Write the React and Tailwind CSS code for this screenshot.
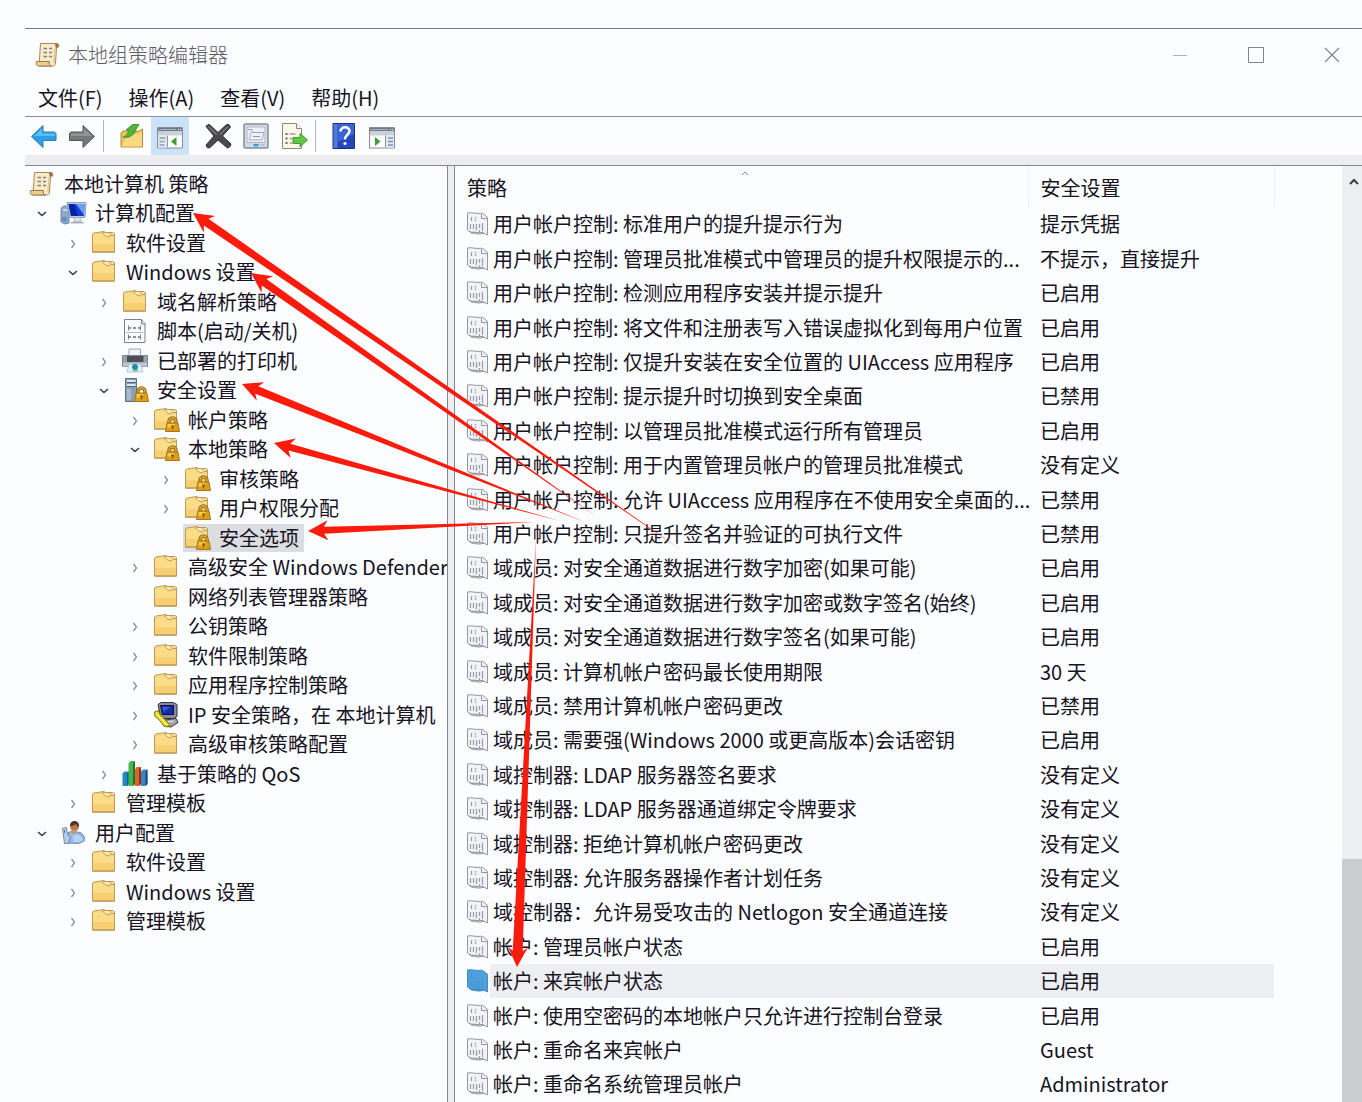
import { useState } from 'react';
import clsx from 'clsx';

const treeRows = [
  { id: 'root', level: 0, icon: 'scroll', label: '本地计算机 策略' },
  { id: 'computer', level: 1, icon: 'computer', label: '计算机配置', state: 'open' },
  { id: 'c-soft', level: 2, icon: 'folder', label: '软件设置', state: 'closed' },
  { id: 'c-win', level: 2, icon: 'folder', label: 'Windows 设置', state: 'open' },
  { id: 'dns', level: 3, icon: 'folder', label: '域名解析策略', state: 'closed' },
  { id: 'scripts', level: 3, icon: 'script', label: '脚本(启动/关机)' },
  { id: 'printers', level: 3, icon: 'printer', label: '已部署的打印机', state: 'closed' },
  { id: 'security', level: 3, icon: 'server', label: '安全设置', state: 'open' },
  { id: 'account', level: 4, icon: 'locked', label: '帐户策略', state: 'closed' },
  { id: 'local', level: 4, icon: 'locked', label: '本地策略', state: 'open' },
  { id: 'audit', level: 5, icon: 'locked', label: '审核策略', state: 'closed' },
  { id: 'rights', level: 5, icon: 'locked', label: '用户权限分配', state: 'closed' },
  { id: 'options', level: 5, icon: 'locked', label: '安全选项' },
  { id: 'defender', level: 4, icon: 'folder', label: '高级安全 Windows Defender', state: 'closed' },
  { id: 'network', level: 4, icon: 'folder', label: '网络列表管理器策略' },
  { id: 'pubkey', level: 4, icon: 'folder', label: '公钥策略', state: 'closed' },
  { id: 'restrict', level: 4, icon: 'folder', label: '软件限制策略', state: 'closed' },
  { id: 'appctl', level: 4, icon: 'folder', label: '应用程序控制策略', state: 'closed' },
  { id: 'ipsec', level: 4, icon: 'ipsec', label: 'IP 安全策略，在 本地计算机', state: 'closed' },
  { id: 'advaudit', level: 4, icon: 'folder', label: '高级审核策略配置', state: 'closed' },
  { id: 'qos', level: 3, icon: 'chart', label: '基于策略的 QoS', state: 'closed' },
  { id: 'c-tpl', level: 2, icon: 'folder', label: '管理模板', state: 'closed' },
  { id: 'user', level: 1, icon: 'user', label: '用户配置', state: 'open' },
  { id: 'u-soft', level: 2, icon: 'folder', label: '软件设置', state: 'closed' },
  { id: 'u-win', level: 2, icon: 'folder', label: 'Windows 设置', state: 'closed' },
  { id: 'u-tpl', level: 2, icon: 'folder', label: '管理模板', state: 'closed' },
];

const indent = ['pl-[3px]', 'pl-[7px]', 'pl-[38px]', 'pl-[69px]', 'pl-[100px]', 'pl-[131px]'];

const policies = [
  ['用户帐户控制: 标准用户的提升提示行为', '提示凭据'],
  ['用户帐户控制: 管理员批准模式中管理员的提升权限提示的...', '不提示，直接提升'],
  ['用户帐户控制: 检测应用程序安装并提示提升', '已启用'],
  ['用户帐户控制: 将文件和注册表写入错误虚拟化到每用户位置', '已启用'],
  ['用户帐户控制: 仅提升安装在安全位置的 UIAccess 应用程序', '已启用'],
  ['用户帐户控制: 提示提升时切换到安全桌面', '已禁用'],
  ['用户帐户控制: 以管理员批准模式运行所有管理员', '已启用'],
  ['用户帐户控制: 用于内置管理员帐户的管理员批准模式', '没有定义'],
  ['用户帐户控制: 允许 UIAccess 应用程序在不使用安全桌面的...', '已禁用'],
  ['用户帐户控制: 只提升签名并验证的可执行文件', '已禁用'],
  ['域成员: 对安全通道数据进行数字加密(如果可能)', '已启用'],
  ['域成员: 对安全通道数据进行数字加密或数字签名(始终)', '已启用'],
  ['域成员: 对安全通道数据进行数字签名(如果可能)', '已启用'],
  ['域成员: 计算机帐户密码最长使用期限', '30 天'],
  ['域成员: 禁用计算机帐户密码更改', '已禁用'],
  ['域成员: 需要强(Windows 2000 或更高版本)会话密钥', '已启用'],
  ['域控制器: LDAP 服务器签名要求', '没有定义'],
  ['域控制器: LDAP 服务器通道绑定令牌要求', '没有定义'],
  ['域控制器: 拒绝计算机帐户密码更改', '没有定义'],
  ['域控制器: 允许服务器操作者计划任务', '没有定义'],
  ['域控制器：允许易受攻击的 Netlogon 安全通道连接', '没有定义'],
  ['帐户: 管理员帐户状态', '已启用'],
  ['帐户: 来宾帐户状态', '已启用'],
  ['帐户: 使用空密码的本地帐户只允许进行控制台登录', '已启用'],
  ['帐户: 重命名来宾帐户', 'Guest'],
  ['帐户: 重命名系统管理员帐户', 'Administrator'],
];

// tip, tail and shaft width at the head
const arrows = [
  { tip: [193, 213], tail: [683, 551], width: 8 },
  { tip: [251, 273], tail: [597, 517], width: 8 },
  { tip: [242, 384], tail: [587, 523], width: 8 },
  { tip: [274, 443], tail: [560, 521], width: 7 },
  { tip: [308, 531], tail: [535, 522], width: 7 },
  { tip: [517, 967], tail: [536, 538], width: 10 },
];

function arrowPoints({ tip, tail, width }) {
  const dx = tail[0] - tip[0];
  const dy = tail[1] - tip[1];
  const len = Math.hypot(dx, dy);
  const at = (along, side) => [
    tip[0] + (dx * along - dy * side) / len,
    tip[1] + (dy * along + dx * side) / len,
  ].join(',');

  return [
    at(0, 0), at(20, 10), at(16, width / 2), at(len, 0), at(16, -width / 2), at(20, -10),
  ].join(' ');
}

function Arrows() {
  return (
    <svg
      className="absolute left-0 top-0 w-px h-px overflow-visible pointer-events-none"
      aria-hidden="true"
    >
      {arrows.map((arrow) => (
        <polygon key={arrow.tip.join()} points={arrowPoints(arrow)} fill="#fb1b0d" />
      ))}
    </svg>
  );
}

function FolderShape() {
  return (
    <>
      <path d="M2.500 23V5l1.500-1L14 2.500l1.500 1h7.500L24.500 5v18z" fill="#f9d984" stroke="#c19a55" />
      <path d="M3 22.500V6.500L13 5l2 2.500h9v15z" fill="#fbdc88" />
      <path d="M3 15h21v7.500H3z" fill="#f7cf73" />
      <path d="M12.500 4l2.500 2.500 4 1.500 1.500-1.500H24V4.500l-1-1h-8z" fill="#fdf0bf" stroke="#c19a55" />
      <path d="M18 5h4" stroke="#e2ab4c" />
      <path d="M2.500 23H24.500" stroke="#a98345" />
    </>
  );
}

function Padlock() {
  return (
    <>
      <path d="M17 18v-2.500a3.500 3.500 0 0 1 7 0V18" fill="none" stroke="#8f6a14" strokeWidth="3.500" />
      <path d="M17 18v-2.500a3.500 3.500 0 0 1 7 0V18" fill="none" stroke="#e2ad35" strokeWidth="1.500" />
      <path d="M15 17h11l1.500 8.500H13.500z" fill="#dc9d18" stroke="#a87510" />
      <path d="M15.800 18h7l-1.500 3.500h-6z" fill="#f5c84e" />
      <circle cx="20.500" cy="20.500" r="1.300" fill="#7d5205" />
      <path d="M20 20.500h1v3h-1z" fill="#7d5205" />
    </>
  );
}

function ScrollShape() {
  return (
    <>
      <path d="M6.500 2.500H23c1.800 0 2.200 1.500 1.500 3.500l-2 .5L21.500 22c-.3 2-1.300 3-3 3H5z" fill="#f8ebca" stroke="#a8885a" />
      <path d="M21 3c2-.8 4.300.2 3.300 3.200l-2.600.3z" fill="#9a6a4c" />
      <path d="M21 7l-1 15" stroke="#e5c98d" strokeWidth="1.500" />
      <path d="M2.500 20.500h13c-.8 2 0 3.800 2 4.500H5c-2.600 0-3.400-2-2.500-4.500z" fill="#eccf8b" stroke="#98784a" />
      <path d="M9.500 7.500h3.500M15 7.500h3M9.500 11.500h3.500M15 11.500h3M9.500 15.500h3.500M15 15.500h3" stroke="#837f80" strokeWidth="1.500" />
    </>
  );
}

function TreeIcon({ name }) {
  return (
    <svg className="w-7 h-7 shrink-0" viewBox="0 0 28 28" aria-hidden="true">
      {name === 'scroll' && <ScrollShape />}
      {name === 'folder' && <FolderShape />}
      {name === 'locked' && (
        <>
          <FolderShape />
          <Padlock />
        </>
      )}
      {name === 'computer' && (
        <>
          <path d="M2 11q0-3 3-4h5V24l-4 1-4-2z" fill="#8fa9c6" stroke="#7088a6" />
          <path d="M4 11h4" stroke="#e4eef8" strokeWidth="1.500" />
          <path d="M8 3.500h19L26 18.500H11z" fill="#bfd0e4" stroke="#8fa3bd" />
          <path d="M9.500 5H25.500l-.5 12H12z" fill="#123fd6" />
          <path d="M17 5h8.500l-.5 11z" fill="#6f9cf5" />
          <path d="M9.500 5H15l4 12h-7z" fill="#0720a8" />
          <path d="M16 18.500h5l1.500 4h-8z" fill="#dfe3e8" stroke="#9ba3ad" strokeWidth=".7" />
          <path d="M12 23h12l1 1.500H11z" fill="#a9b2bd" />
          <circle cx="5.500" cy="20" r="2.500" fill="#5b91ce" />
        </>
      )}
      {name === 'script' && (
        <>
          <path d="M3.500 2.500h17l3.500 4v19h-20.500z" fill="#fbfcfe" stroke="#7b7f89" />
          <path d="M20.500 2.500v4.500h3.500" fill="#dfe3ea" stroke="#7b7f89" />
          <path d="M7 11h3M12 11h3M17 11h3M7 20h3M12 20h3M17 20h3" stroke="#696e7e" strokeWidth="1.500" />
          <path d="M7.500 8.500v5M19.500 8.500v5M7.500 17.500v5M19.500 17.500v5" stroke="#7f8494" strokeWidth="1" />
          <path d="M5 15.500h17" stroke="#b7bbc6" />
        </>
      )}
      {name === 'printer' && (
        <>
          <path d="M8 9V2h11.500v7" fill="#f3f6f9" stroke="#9ca3ad" />
          <path d="M1.500 8.500h25v11h-25z" fill="#98a1ad" stroke="#7d8590" />
          <path d="M6 9h16.500v6H6z" fill="#4c4f56" />
          <path d="M2 15.500h24v4H2z" fill="#bdc7d2" />
          <path d="M8 17h11.500l2.500 8H6z" fill="#e3f2fa" stroke="#9bb6c6" strokeWidth=".7" />
          <circle cx="14" cy="20" r="3" fill="#2c86ab" />
          <path d="M12 23.500h5" stroke="#5dbf92" strokeWidth="1.500" />
          <circle cx="24" cy="11" r="1" fill="#6fd36f" />
        </>
      )}
      {name === 'server' && (
        <>
          <path d="M4.500 2.500h11v23h-11z" fill="#8ba0b5" stroke="#5f7387" />
          <path d="M6 4h8.500v2H6zM6 8h8.500v2H6z" fill="#dce8f3" />
          <path d="M6 6.500h8.500M6 10.500h8.500" stroke="#4e6275" />
          <path d="M6 13h4v11H6z" fill="#a9bccd" />
          <Padlock />
        </>
      )}
      {name === 'ipsec' && (
        <>
          <path d="M6 3.500l3-2h12l4 2v12l-3 2H9z" fill="#8c8b9c" stroke="#33333f" />
          <path d="M8.500 4.500h13v9h-11z" fill="#142ea8" stroke="#0b0d3a" />
          <path d="M10 6h8l-6 5z" fill="#3558e0" />
          <path d="M9 19.500l15-2 2 4-7 4.500-7-1z" fill="#a3a3a9" stroke="#35353b" />
          <path d="M16 21l6-1" stroke="#eee" />
          <path d="M2.500 11l4-1.500 1.500 4 3 3 6.500 7-1.500 2.500-4-1-5.500-7-3.500-2.500z" fill="#ede02b" stroke="#77700e" />
          <path d="M5 13l10 11" stroke="#fdf894" />
        </>
      )}
      {name === 'chart' && (
        <>
          <path d="M1.500 13.500l2-2h4.500v12.500l-2 2H1.500z" fill="#2489c6" />
          <path d="M6 13.500l2-2V24l-2 2z" fill="#125b91" />
          <path d="M7.500 3.500l2-2.500H14v23l-2 2H7.500z" fill="#42b649" />
          <path d="M12 3.500L14 1v23l-2 2z" fill="#1c752b" />
          <path d="M14 9.500L15.500 7H20v17l-2 2h-4z" fill="#e1602b" />
          <path d="M18 9.500L20 7v17l-2 2z" fill="#93310f" />
          <path d="M20 11.500L22 9.500h4.500V24l-2 2H20z" fill="#3b83c3" />
          <path d="M24.500 11.500l2-2V24l-2 2z" fill="#1b4a7d" />
        </>
      )}
      {name === 'user' && (
        <>
          <path d="M9 14l4-2 8 1.500c3 1.500 5 5 4.500 8-3 3-9 3.500-14 2.500l-3 .5z" fill="#8fb9e6" stroke="#6686ad" />
          <path d="M14 16c4-1.500 8 0 10 5-3 2.500-7 2.500-10 1.500z" fill="#b5d4f4" />
          <circle cx="15.500" cy="7.500" r="4.500" fill="#b8784d" />
          <path d="M11 7c0-4 2.500-5 4.500-5s5 1.500 4.500 6c-2-1-2.500-2.500-3.500-3-1.500 1.500-3.500 2-5.500 2z" fill="#4f3529" />
          <path d="M12 13l3 3 3-3-1-2h-4z" fill="#cf9467" />
          <path d="M3.500 9.500l4-1 1 6.500 2.500 3.500-1.500 6H5.500z" fill="#b9cee6" stroke="#7289a5" />
          <path d="M5.500 11v3" stroke="#5a7291" />
        </>
      )}
    </svg>
  );
}

function PolicyIcon({ selected }) {
  return (
    <svg className="w-6 h-6 shrink-0" viewBox="0 0 24 24" aria-hidden="true">
      <path
        d="M1.500 1c4-1 8 1 13 .3h2l5 4v17.700l-4-2c-4 2-8 .5-12 0l-4-3z"
        fill={selected ? '#4f9fdc' : '#f2f3f6'}
        stroke={selected ? '#3f8ccb' : '#94979f'}
      />
      <path d="M15.500 2v4.500h6" fill="none" stroke={selected ? '#5aa6e0' : '#94979f'} />
      <path
        d="M5.500 5v4M9.500 5v1.500M9.500 7.500V9M4.500 12v5M7.500 12v5M10.500 12v6M13.500 12v4M13.500 18v2M16.500 11v8"
        fill="none"
        stroke={selected ? '#4793d1' : '#9a9da7'}
        strokeWidth="1.200"
      />
      <path d="M3 19c3 2.500 5 .5 8 1.500s5-1 7 1" fill="none" stroke={selected ? '#3d86c4' : '#85888f'} />
    </svg>
  );
}

function ToolIcon({ name }) {
  return (
    <svg className="w-7 h-7" viewBox="0 0 28 28" aria-hidden="true">
      {name === 'back' && (
        <>
          <path d="M1.500 14.500L13 3.500v6.500h11.500l1.500 1.500v7H13v7z" fill="#2ba0e6" stroke="#3378a8" />
          <path d="M4 14l8-7.500V11.500h13V14z" fill="#58bef3" />
        </>
      )}
      {name === 'forward' && (
        <>
          <path d="M26.500 14.500L15 3.500v6.500H3L1.500 11.500v7H15v7z" fill="#77787b" stroke="#55565a" />
          <path d="M24 14l-8-7.500V11.500H3V14z" fill="#929396" />
        </>
      )}
      {name === 'up' && (
        <>
          <path d="M3 25V11l2-2h6l2 2 8-2 3.500-2v18z" fill="#f0c25c" stroke="#b98a34" />
          <path d="M3.500 24.500L8 15l16-5v14.500z" fill="#fad880" />
          <path d="M5 15c4-1 5-4 5.500-6.500l-2.500-.5L14.500 2.500H21l-2.500 4C17 11 13 17 5 15z" fill="#4cb63a" stroke="#2f8c27" strokeWidth=".8" />
        </>
      )}
      {(name === 'tree' || name === 'actions') && (
        <>
          <path d="M1.500 5.500h25v20.500h-25z" fill="#fff" stroke="#858d97" />
          <path d="M2 6h24v3H2z" fill="#6f7a87" />
          <path d="M3 7.500h17" stroke="#a9b4c0" />
          <path d="M22 7.500h1M24 7.500h1" stroke="#fff" />
          <path d="M2 9h24v4.500H2z" fill="#cad0d8" />
          {name === 'tree' ? (
            <>
              <path d="M2 13.500h9v12H2z" fill="#e3e8ee" />
              <path d="M11.500 13.500v12" stroke="#8d96a0" />
              <path d="M3.500 16h6M3.500 19.500h5M3.500 23h5" stroke="#8ba3bd" strokeWidth="1.500" />
              <path d="M20.500 15v9l-5.500-4.500z" fill="#3f9d35" />
            </>
          ) : (
            <>
              <path d="M18 13.500h8v12h-8z" fill="#e3e8ee" />
              <path d="M17.500 13.500v12" stroke="#8d96a0" />
              <path d="M20 16h5M20 19.500h5M20 23h5" stroke="#7494c0" strokeWidth="1.500" />
              <path d="M7 15v9l5.500-4.500z" fill="#3f9d35" />
            </>
          )}
        </>
      )}
      {name === 'delete' && (
        <>
          <path
            d="M2 4.500Q3.500 2 5.500 2.500l8.500 8L22.500 2.500Q25.500 1.500 26.500 5L18.500 14l8.500 8Q26.500 25.500 23.500 26L14 18 5.500 26Q2.500 26.500 2 23l8-9z"
            fill="#4b4b4e"
            stroke="#333336"
          />
          <path d="M4.500 4.500l8 8M24 4.500l-8 8" stroke="#77777b" strokeWidth="1.500" />
        </>
      )}
      {name === 'properties' && (
        <>
          <rect x="2" y="2" width="24" height="24" rx="1.500" fill="#d5dbe6" stroke="#858b9b" strokeWidth="1.500" />
          <path d="M5 5h18v15.500H5z" fill="#eef2f8" stroke="#aeb6c6" />
          <path d="M6 7.500h4v3h12" fill="none" stroke="#9aa5ba" />
          <path d="M8.500 10.500l-1 7.500h12.500l2-7.500" fill="none" stroke="#a3adc0" />
          <path d="M11 14.500h7" stroke="#8d98ae" />
          <path d="M11 22h6l-1 2.500h-4z" fill="#37a3e6" />
          <path d="M18.500 23h4" stroke="#9aa5ba" />
        </>
      )}
      {name === 'export' && (
        <>
          <path d="M2.500 1.500h14l5 5v20h-19z" fill="#fbf8ea" stroke="#8d897c" />
          <path d="M16.500 1.500v5h5" fill="#fff" stroke="#8d897c" />
          <path d="M5.500 12h2M5.500 16.500h2M5.500 21h2" stroke="#6e6a61" strokeWidth="2" />
          <path d="M9.500 12h6M9.500 16.500h3M9.500 21h3" stroke="#a5a093" strokeWidth="1.500" />
          <path d="M13 15.500h7V11.500l7.500 6.500-7.500 7V21.500h-7z" fill="#63c34a" stroke="#3f9d30" />
        </>
      )}
      {name === 'help' && (
        <>
          <path d="M3 1.500h21.500v25H3z" fill="#2448b9" stroke="#16307f" />
          <path d="M3.500 2h4v24h-4z" fill="#5479dd" />
          <path d="M8 2h16v10L8 20z" fill="#3c64d3" />
          <path d="M10.500 9.500c0-5.500 9-5.500 9-.5 0 3.500-4.500 4-4.500 8.500" fill="none" stroke="#fff" strokeWidth="2.500" />
          <circle cx="15" cy="21.500" r="1.600" fill="#fff" />
        </>
      )}
    </svg>
  );
}

function ToolButton({ name, label, active }) {
  return (
    <button
      type="button"
      aria-label={label}
      className={clsx('flex items-center justify-center w-[38px] h-full', active && 'bg-[#cbe2f8]')}
    >
      <ToolIcon name={name} />
    </button>
  );
}

function Separator() {
  return <div className="w-px h-8 ml-[2px] mr-[9px] bg-[#b4b7bd]" />;
}

function TitleBar() {
  return (
    <header className="flex items-center justify-between h-[52px] border-t border-[#777a80] box-content">
      <div className="flex items-center gap-[6px] pl-[9px]">
        <svg className="w-7 h-7" viewBox="0 0 28 28" aria-hidden="true">
          <ScrollShape />
        </svg>
        <h1 className="font-light text-[#5f5b66]">本地组策略编辑器</h1>
      </div>
      <div className="flex gap-4 text-[#85828c]">
        <button type="button" aria-label="最小化" className="flex items-center justify-center w-[60px] h-10">
          <svg className="w-4 h-4" viewBox="0 0 16 16" aria-hidden="true">
            <path d="M1 8.500h14" stroke="#b3b3ba" />
          </svg>
        </button>
        <button type="button" aria-label="最大化" className="flex items-center justify-center w-[60px] h-10">
          <svg className="w-4 h-4" viewBox="0 0 16 16" aria-hidden="true">
            <path d="M.5.5h15v15H.5z" fill="none" stroke="currentColor" />
          </svg>
        </button>
        <button type="button" aria-label="关闭" className="flex items-center justify-center w-[60px] h-10">
          <svg className="w-4 h-4" viewBox="0 0 16 16" aria-hidden="true">
            <path d="M1 1l14 14M15 1L1 15" stroke="currentColor" strokeWidth="1.200" />
          </svg>
        </button>
      </div>
    </header>
  );
}

function MenuBar() {
  return (
    <nav className="flex items-center h-[35px] pb-px">
      {['文件(F)', '操作(A)', '查看(V)', '帮助(H)'].map((item) => (
        <button key={item} type="button" className="px-[13px] whitespace-nowrap">{item}</button>
      ))}
    </nav>
  );
}

function Toolbar() {
  return (
    <div className="flex items-center h-[38px] border-t border-[#8e9197] box-content">
      <ToolButton name="back" label="后退" />
      <ToolButton name="forward" label="前进" />
      <Separator />
      <ToolButton name="up" label="上一级" />
      <ToolButton name="tree" label="显示/隐藏控制台树" active />
      <div className="w-[10px]" />
      <ToolButton name="delete" label="删除" />
      <ToolButton name="properties" label="属性" />
      <ToolButton name="export" label="导出列表" />
      <Separator />
      <ToolButton name="help" label="帮助" />
      <ToolButton name="actions" label="显示/隐藏操作窗格" />
    </div>
  );
}

function Chevron({ state }) {
  return (
    <svg className="w-3 h-3" viewBox="0 0 12 12" fill="none" aria-hidden="true">
      {state === 'open'
        ? <path d="M2 5l4 3.500L10 5" stroke="#3c3c42" strokeWidth="1.600" />
        : <path d="M4.500 3L7.500 7l-3 4" stroke="#8d8d94" strokeWidth="1.300" />}
    </svg>
  );
}

function PolicyTree() {
  const [selected, setSelected] = useState('options');

  return (
    <aside className="w-[423px] shrink-0 overflow-hidden pt-[3px] border-r border-[#83878f]">
      <ul>
        {treeRows.map(({ id, level, icon, label, state }) => (
          <li key={id} className={clsx('flex items-center odd:h-[29px] even:h-[30px]', indent[level])}>
            {level > 0 && (
              <div className="flex items-center w-[27px] shrink-0">
                {state && (
                  <button type="button" aria-label={label} aria-expanded={state === 'open'} className="flex justify-center w-5">
                    <Chevron state={state} />
                  </button>
                )}
              </div>
            )}
            <button
              type="button"
              onClick={() => setSelected(id)}
              className={clsx(
                'flex items-center gap-2 h-7 pr-[5px] whitespace-nowrap',
                selected === id && 'bg-[#dcdde0]',
              )}
            >
              <TreeIcon name={icon} />
              {label}
            </button>
          </li>
        ))}
      </ul>
    </aside>
  );
}

function PolicyTable() {
  const [selected, setSelected] = useState(22);

  return (
    <table className="w-full table-fixed border-collapse text-left">
      <colgroup>
        <col className="w-[573px]" />
        <col className="w-[246px]" />
        <col />
      </colgroup>
      <thead>
        <tr className="h-[41px]">
          <th scope="col" className="relative p-0 pt-[2px] pl-3 font-normal border-r border-[#eff0f4]">
            策略
            <svg className="absolute left-1/2 top-1 w-2 h-2" viewBox="0 0 8 8" fill="none" aria-hidden="true">
              <path d="M1 5l3-3 3 3" stroke="#8d8d94" />
            </svg>
          </th>
          <th scope="col" className="p-0 pt-[2px] pl-3 font-normal border-r border-[#eff0f4]">安全设置</th>
          <td />
        </tr>
      </thead>
      <tbody>
        {policies.map(([name, value], i) => (
          <tr
            key={name}
            onClick={() => setSelected(i)}
            className="h-[34px] nth-[5n+2]:h-[35px] nth-[5n+4]:h-[35px]"
          >
            <td className="p-0 pl-[11px]">
              <div className="flex items-center">
                <PolicyIcon selected={selected === i} />
                <span className={clsx('flex-1 pl-[3px] leading-[34px] whitespace-nowrap', selected === i && 'bg-[#eeeff2]')}>
                  {name}
                </span>
              </div>
            </td>
            <td className="p-0">
              <div className={clsx('pl-3 leading-[34px] whitespace-nowrap', selected === i && 'bg-[#eeeff2]')}>
                {value}
              </div>
            </td>
            <td />
          </tr>
        ))}
      </tbody>
    </table>
  );
}

function ScrollBar() {
  return (
    <div className="flex flex-col w-5 shrink-0 bg-[#eeeff2]">
      <button type="button" aria-label="向上滚动" className="flex items-center justify-center h-8 pl-1">
        <svg className="w-3 h-3" viewBox="0 0 12 12" fill="none" aria-hidden="true">
          <path d="M2 8l4-4 4 4" stroke="#3c3c42" strokeWidth="2" />
        </svg>
      </button>
      <div className="grow-[661]" />
      <div className="grow-[243] bg-[#cbccd0]" />
    </div>
  );
}

export default function App() {
  return (
    <div className="relative flex flex-col min-h-screen overflow-hidden pt-7 pl-[25px] bg-[#fcfdff] text-[20px] leading-7 text-[#17131f] font-['Noto_Sans_CJK_SC',sans-serif]">
      <TitleBar />
      <MenuBar />
      <Toolbar />
      <div className="h-[10px] bg-[#ededf0]" />
      <main className="flex flex-1 border-t border-[#83878f]">
        <PolicyTree />
        <div className="w-[6px] shrink-0 bg-[#ededf2]" />
        <section className="flex-1 min-w-0 overflow-hidden border-l border-[#83878f]">
          <PolicyTable />
        </section>
        <ScrollBar />
      </main>
      <Arrows />
    </div>
  );
}
